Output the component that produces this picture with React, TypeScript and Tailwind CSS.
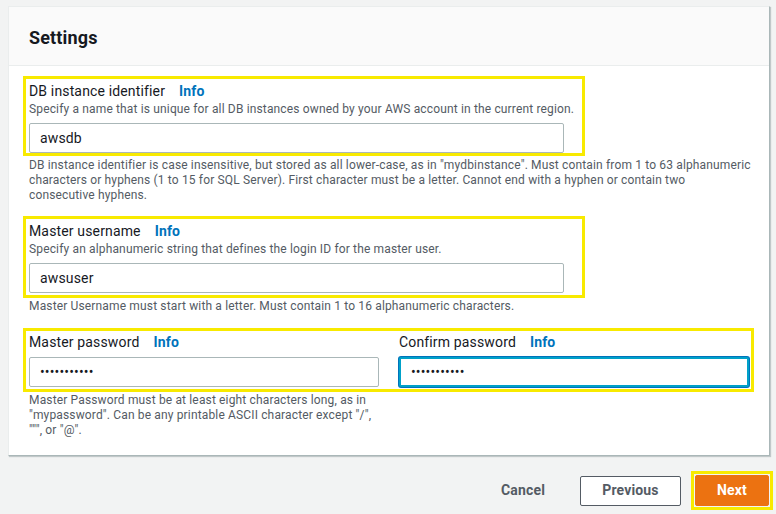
import { useState } from "react";

const font = { fontFamily: "Roboto, 'Liberation Sans', sans-serif" };

const InfoLink = () => (
  <a className="ml-[14px] font-bold text-[#0073bb] cursor-pointer">Info</a>
);

const Field = ({
  label,
  desc,
  value,
  type = "text",
  focused = false,
  inputClass = "w-[535px]",
}: {
  label: string;
  desc?: string;
  value: string;
  type?: string;
  focused?: boolean;
  inputClass?: string;
}) => (
  <div>
    <div className="text-[14px] leading-[18px] text-[#16191f]">
      {label}
      <InfoLink />
    </div>
    {desc && <div className="text-[12px] leading-[16px] text-[#545b64] mt-[1px]">{desc}</div>}
    <input
      type={type}
      defaultValue={value}
      autoFocus={focused}
      className={`mt-[6px] h-[30px] px-[10px] text-[14px] text-[#16191f] bg-white rounded-[2px] outline-none ${inputClass} ${
        focused ? "border-2 border-[#00a1c9] shadow-[0_0_0_1px_#0073bb]" : "border border-[#aab7b8]"
      }`}
    />
  </div>
);

export default function App() {
  const [pw] = useState("abcdefghijk");
  return (
    <div
      className="w-[776px] h-[514px] bg-[#f2f3f3] pt-[6px] pl-[8px] overflow-hidden tracking-[0.15px]"
      style={font}
    >
      <div className="w-[762px] bg-white border border-[#eaeded] border-r-[#aab7b8] border-b-[#aab7b8] shadow-[1px_1px_1px_rgba(0,28,36,0.2)]">
        <div className="h-[59px] pt-[3px] bg-[#fafafa] border-b border-[#eaeded] flex items-center px-[20px]">
          <h2 className="text-[18px] font-bold text-[#16191f]">Settings</h2>
        </div>
        <div className="pt-[10px] pb-[17px] px-[14px]">
          <div className="w-[562px] border-[3px] border-[#f8ea00] pt-[3px] pl-[3px] pb-0">
            <Field
              label="DB instance identifier"
              desc="Specify a name that is unique for all DB instances owned by your AWS account in the current region."
              value="awsdb"
            />
          </div>
          <p className="mt-[2px] pl-[6px] text-[12px] leading-[15px] text-[#545b64] w-[731px]">
            DB instance identifier is case insensitive, but stored as all lower-case, as in "mydbinstance". Must contain from 1 to 63 alphanumeric characters or hyphens (1 to 15 for SQL Server). First character must be a letter. Cannot end with a hyphen or contain two consecutive hyphens.
          </p>

          <div className="mt-[13px] w-[562px] border-[3px] border-[#f8ea00] pt-[3px] pl-[3px] pb-[2px]">
            <Field
              label="Master username"
              desc="Specify an alphanumeric string that defines the login ID for the master user."
              value="awsuser"
            />
          </div>
          <p className="mt-[1px] pl-[6px] text-[12px] leading-[15px] text-[#545b64]">
            Master Username must start with a letter. Must contain 1 to 16 alphanumeric characters.
          </p>

          <div className="mt-[14px] w-[731px] border-[3px] border-[#f8ea00] pt-[2px] pl-[3px] pb-[2px] grid grid-cols-[350px_350px] gap-x-[20px]">
            <Field label="Master password" value={pw} type="password" inputClass="w-[350px]" />
            <Field label="Confirm password" value={pw} type="password" focused inputClass="w-[350px]" />
          </div>
          <p className="mt-[1px] pl-[6px] w-[360px] text-[12px] leading-[15px] text-[#545b64]">
            Master Password must be at least eight characters long, as in "mypassword". Can be any printable ASCII character except "/", """, or "@".
          </p>
        </div>
      </div>

      <div className="mt-[15px] pr-[3px] flex items-center justify-end text-[14px] font-bold">
        <button className="px-[20px] h-[30px] text-[#545b64]">Cancel</button>
        <button className="ml-[15px] w-[101px] h-[30px] bg-white border border-[#545b64] rounded-[2px] text-[#545b64]">
          Previous
        </button>
        <div className="ml-[10px] border-[3px] border-[#f8ea00] p-[1px]">
          <button className="w-[74px] h-[31px] bg-[#ec7211] border border-[#ec7211] rounded-[2px] text-white">
            Next
          </button>
        </div>
      </div>
    </div>
  );
}
